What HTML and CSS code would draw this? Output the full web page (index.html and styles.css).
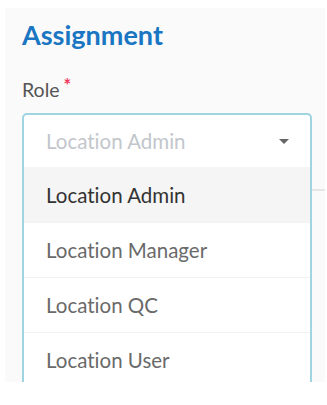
FILE: index.html
```html
<!DOCTYPE html>
<html>
<head>
<meta charset="utf-8">
<link rel="stylesheet" href="styles.css">
</head>
<body>
<div class="panel">
  <h2 class="title">Assignment</h2>
  <label class="label">Role<span class="req">*</span></label>
  <div class="select">
    <div class="control">
      <span class="placeholder">Location Admin</span>
      <span class="caret"></span>
    </div>
    <ul class="menu">
      <li class="option active">Location Admin</li>
      <li class="option">Location Manager</li>
      <li class="option">Location QC</li>
      <li class="option">Location User</li>
    </ul>
  </div>
  <div class="divider"></div>
</div>
</body>
</html>
```
FILE: styles.css
```css
html, body {
  margin: 0;
  padding: 0;
  background: #ffffff;
}
body {
  font-family: Lato, "Open Sans", sans-serif;
  font-variant-ligatures: none;
}
.panel {
  position: relative;
  margin: 8px 0 0 5px;
  width: 320px;
  height: 374px;
  background: #fafafa;
  box-sizing: border-box;
  padding: 11px 0 0 17px;
  overflow: hidden;
}
.title {
  margin: 0;
  font-size: 27px;
  line-height: 32px;
  font-weight: 700;
  color: #1a76c2;
}
.label {
  display: block;
  margin-top: 27px;
  font-size: 19.5px;
  line-height: 24px;
  color: #555555;
}
.req {
  color: #f0385a;
  font-size: 18px;
  font-weight: 700;
  vertical-align: top;
  margin-left: 4px;
  position: relative;
  top: -5px;
}
.select {
  position: relative;
  z-index: 2;
  margin-top: 11px;
  width: 290px;
  box-sizing: border-box;
  border: 2px solid #9fd4e2;
  border-bottom: none;
  border-radius: 5px 5px 0 0;
  background: #ffffff;
  height: 300px;
}
.control {
  height: 52px;
  display: flex;
  align-items: center;
  justify-content: space-between;
  padding: 0 21px 0 22px;
}
.placeholder {
  font-size: 20.5px;
  color: #c2c6cc;
}
.caret {
  width: 0;
  height: 0;
  border-left: 5px solid transparent;
  border-right: 5px solid transparent;
  border-top: 5px solid #666666;
}
.menu {
  list-style: none;
  margin: 0;
  padding: 0;
}
.option {
  height: 55px;
  box-sizing: border-box;
  display: flex;
  align-items: center;
  padding-left: 22px;
  font-size: 20.5px;
  color: #6a6a6a;
  border-top: 1px solid #f2f2f2;
}
.option:first-child {
  border-top: none;
}
.option.active {
  background: #f5f5f5;
  color: #333333;
}
.divider {
  position: absolute;
  left: 300px;
  right: 0;
  top: 181px;
  height: 2px;
  background: #e6e6e6;
}
```
